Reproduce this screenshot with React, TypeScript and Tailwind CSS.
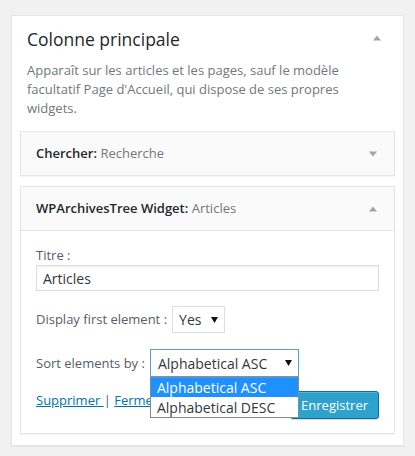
import React from "react";

function Tri({ up, className }: { up?: boolean; className?: string }) {
  return (
    <svg width="8" height="6" viewBox="0 0 8 6" className={className}>
      {up ? <path d="M4 0.5 L8 5.5 L0 5.5 Z" fill="currentColor" /> : <path d="M0 0.5 L8 0.5 L4 5.5 Z" fill="currentColor" />}
    </svg>
  );
}

function Caret() {
  return (
    <svg width="7" height="6" viewBox="0 0 7 6">
      <path d="M0 0 L7 0 L3.5 6 Z" fill="#111" />
    </svg>
  );
}

export default function App() {
  return (
    <div className="w-[415px] h-[456px] bg-[#f1f1f1] pt-[15px] pl-[11px] font-['Open_Sans','Noto_Sans',sans-serif] text-[13px]">
      <div className="w-[393px] h-[431px] bg-white border border-[#e5e5e5] shadow-[0_1px_1px_rgba(0,0,0,0.04)]">
        <div className="flex items-start justify-between pl-[15px] pr-[22px] pt-[11px]">
          <h2 className="text-[17.5px] leading-[24px] text-[#23282d] font-normal">Colonne principale</h2>
          <Tri up className="mt-[8px] text-[#a0a5aa]" />
        </div>
        <p className="mt-[10px] px-[15px] text-[13px] leading-[19px] text-[#72777c]">
          Apparaît sur les articles et les pages, sauf le modèle facultatif Page d'Accueil, qui dispose de ses propres widgets.
        </p>

        <div className="mx-[8px] mt-[13px] h-[45px] bg-[#fafafa] border border-[#e5e5e5] shadow-[0_1px_1px_rgba(0,0,0,0.04)] flex items-center justify-between pl-[15px] pr-[17px]">
          <div className="text-[13px] leading-[19px]">
            <span className="font-semibold text-[#23282d]">Chercher:</span>{" "}
            <span className="text-[#72777c]">Recherche</span>
          </div>
          <Tri className="text-[#a0a5aa]" />
        </div>

        <div className="mx-[8px] mt-[10px] border border-[#e5e5e5] shadow-[0_1px_1px_rgba(0,0,0,0.04)]">
          <div className="h-[44px] bg-[#fafafa] border-b border-[#e5e5e5] flex items-center justify-between pl-[15px] pr-[17px]">
            <div className="text-[13px] leading-[19px]">
              <span className="font-semibold text-[#23282d]">WPArchivesTree Widget:</span>{" "}
              <span className="text-[#72777c]">Articles</span>
            </div>
            <Tri up className="text-[#a0a5aa]" />
          </div>
          <div className="bg-white px-[15px] pt-[15px] pb-[14px]">
            <div className="text-[13px] leading-[19px] text-[#555d66]">Titre :</div>
            <div className="h-[26px] border border-[#dddddd] shadow-[inset_0_1px_2px_rgba(0,0,0,0.07)] flex items-center px-[6px] text-[14px] text-[#32373c]">
              Articles
            </div>

            <div className="mt-[15px] flex items-center">
              <span className="text-[13px] leading-[19px] text-[#555d66]">Display first element :</span>
              <div className="ml-[5px] w-[53px] h-[27px] border border-[#dddddd] flex items-center justify-between pl-[6px] pr-[6px] text-[14px] text-[#32373c]">
                <span>Yes</span>
                <Caret />
              </div>
            </div>

            <div className="mt-[16px] flex items-center">
              <span className="text-[13px] leading-[19px] text-[#555d66]">Sort elements by :</span>
              <div className="relative ml-[5px]">
                <div className="w-[149px] h-[28px] border border-[#5b9dd9] flex items-center justify-between pl-[7px] pr-[6px] text-[14px] text-[#32373c]">
                  <span>Alphabetical ASC</span>
                  <Caret />
                </div>
                <div className="absolute left-0 top-[28px] w-[149px] z-10 bg-white border border-[#7f8b96] text-[14px] leading-[19px]">
                  <div className="bg-[#1e90ff] text-white pl-[6px] h-[19px] flex items-center">Alphabetical ASC</div>
                  <div className="text-[#32373c] pl-[6px] h-[20px] flex items-center">Alphabetical DESC</div>
                </div>
              </div>
            </div>

            <div className="mt-[14px] flex items-start justify-between">
              <div className="text-[13px] leading-[19px] text-[#555d66] pt-[0px]">
                <a className="text-[#0073aa] underline">Supprimer </a> | <a className="text-[#0073aa] underline">Fermer</a>
              </div>
              <button className="h-[28px] px-[10px] rounded-[3px] bg-[#2ea2cc] border border-[#0074a2] shadow-[inset_0_1px_0_rgba(120,200,230,0.5),0_1px_0_rgba(0,0,0,0.15)] text-white text-[13px] leading-[26px]">
                Enregistrer
              </button>
            </div>
          </div>
        </div>
      </div>
    </div>
  );
}
